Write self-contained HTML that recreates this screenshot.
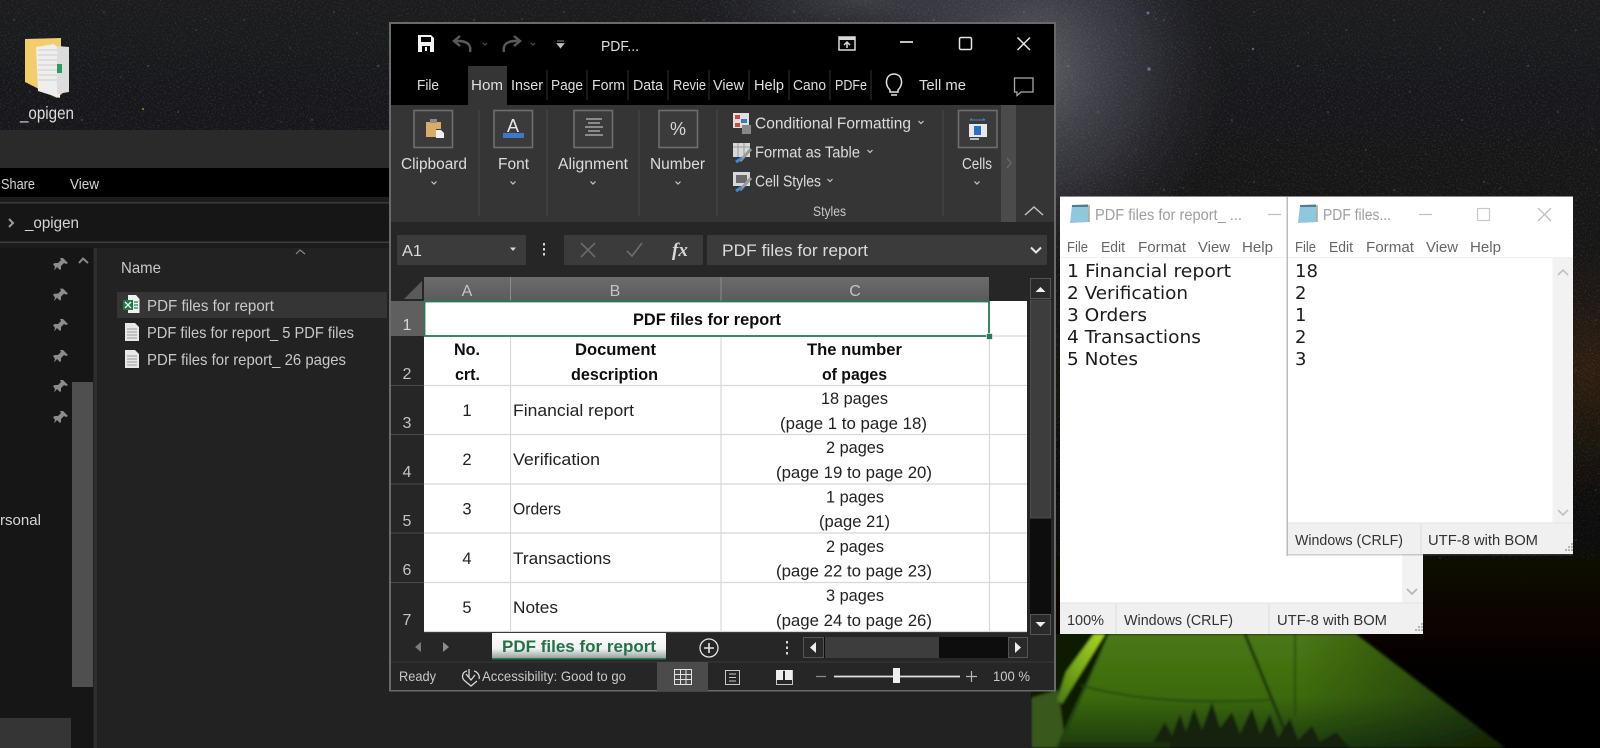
<!DOCTYPE html>
<html><head><meta charset="utf-8"><title>PDF files</title>
<style>
html,body{margin:0;padding:0;background:#141414;width:1600px;height:748px;overflow:hidden}
svg{display:block}
text{font-family:"Liberation Sans",sans-serif;white-space:pre}
.c{font-size:16.5px;fill:#222}.b{font-size:16.5px;fill:#111;font-weight:bold}
.h{font-size:16px;fill:#c4c4c4}
.r{font-size:15.5px;fill:#dcdcdc}.t{font-size:15px;fill:#dedede}
.e{font-size:15px;fill:#c9c9c9}
.n{font-size:18px;fill:#1e1e1e;font-family:"DejaVu Sans",sans-serif}
.m{font-size:15px;fill:#666}.s{font-size:15px;fill:#333}
.st{font-size:14px;fill:#c8c8c8}
</style></head><body>
<svg width="1600" height="748" viewBox="0 0 1600 748" xmlns="http://www.w3.org/2000/svg">
<defs>
<linearGradient id="sky" x1="0" y1="0" x2="0" y2="1"><stop offset="0" stop-color="#1a1b1f"/><stop offset=".55" stop-color="#13120f"/><stop offset=".75" stop-color="#080706"/><stop offset="1" stop-color="#050504"/></linearGradient>
<radialGradient id="band" cx=".5" cy=".5" r=".5"><stop offset="0" stop-color="#6a6a74" stop-opacity=".85"/><stop offset=".55" stop-color="#4a4a56" stop-opacity=".5"/><stop offset="1" stop-color="#33333c" stop-opacity="0"/></radialGradient>
<radialGradient id="brown" cx=".5" cy=".5" r=".5"><stop offset="0" stop-color="#5a3212" stop-opacity=".7"/><stop offset="1" stop-color="#2a1a08" stop-opacity="0"/></radialGradient>
<linearGradient id="tent" x1="0" y1="0" x2="0" y2="1"><stop offset="0" stop-color="#4a7814"/><stop offset=".55" stop-color="#3c6a0e"/><stop offset="1" stop-color="#1c3a08"/></linearGradient>
<linearGradient id="tentR" x1="0" y1="0" x2="1" y2="0"><stop offset="0" stop-color="#0a1204" stop-opacity="0"/><stop offset="1" stop-color="#0a1204" stop-opacity=".6"/></linearGradient>
<linearGradient id="glow" x1="1" y1="0" x2="0" y2="1"><stop offset="0" stop-color="#a8d826"/><stop offset=".5" stop-color="#7aac1a"/><stop offset="1" stop-color="#4a7814"/></linearGradient>
<linearGradient id="hdr" x1="0" y1="0" x2="0" y2="1"><stop offset="0" stop-color="#6c6c6c"/><stop offset="1" stop-color="#5a5a5a"/></linearGradient>
<linearGradient id="tab" x1="0" y1="0" x2="0" y2="1"><stop offset="0" stop-color="#fff"/><stop offset=".6" stop-color="#f2f2f2"/><stop offset="1" stop-color="#8e9a94"/></linearGradient>
<pattern id="stars" width="230" height="170" patternUnits="userSpaceOnUse">
<g fill="#cfd0d4">
<ellipse cx="14" cy="20" rx="1.300" ry=".6"/><ellipse cx="60" cy="48" rx="1.100" ry=".5"/><ellipse cx="104" cy="12" rx="1.200" ry=".6"/><ellipse cx="148" cy="66" rx="1.400" ry=".7"/><ellipse cx="196" cy="30" rx="1.100" ry=".5"/><ellipse cx="30" cy="92" rx="1.100" ry=".5"/><ellipse cx="82" cy="120" rx="1.400" ry=".6"/><ellipse cx="128" cy="140" rx="1" ry=".5"/><ellipse cx="178" cy="112" rx="1.200" ry=".6"/><ellipse cx="216" cy="150" rx="1.100" ry=".5"/><ellipse cx="46" cy="154" rx="1" ry=".5"/>
</g></pattern>
<pattern id="stars2" width="317" height="211" patternUnits="userSpaceOnUse">
<g fill="#c4c5cc">
<ellipse cx="40" cy="33" rx="1.100" ry=".5"/><ellipse cx="121" cy="77" rx="1" ry=".5"/><ellipse cx="205" cy="19" rx="1.200" ry=".6"/><ellipse cx="281" cy="122" rx="1.100" ry=".5"/><ellipse cx="94" cy="171" rx="1" ry=".5"/><ellipse cx="232" cy="188" rx="1.200" ry=".6"/>
</g></pattern>
<filter id="grain" x="0" y="0" width="100%" height="100%"><feTurbulence type="fractalNoise" baseFrequency=".6" numOctaves="2" seed="7"/><feColorMatrix values="0 0 0 0 1 0 0 0 0 1 0 0 0 0 1 3 0 0 0 -1.500"/></filter>
<filter id="soft"><feGaussianBlur stdDeviation=".35"/></filter>
<filter id="bl1" x="-5%" y="-5%" width="110%" height="110%"><feGaussianBlur stdDeviation="1.200"/></filter>
</defs>

<g filter="url(#soft)">
<!-- wallpaper -->
<rect width="1600" height="748" fill="url(#sky)"/>
<ellipse cx="1035" cy="70" rx="190" ry="210" fill="url(#band)"/>
<ellipse cx="860" cy="0" rx="180" ry="60" fill="url(#band)" opacity=".5"/>
<ellipse cx="1590" cy="370" rx="130" ry="150" fill="url(#brown)" opacity=".55"/>
<rect width="1600" height="560" fill="url(#stars)" opacity=".26"/>
<rect width="1600" height="560" fill="url(#stars2)" opacity=".22"/>
<rect width="1600" height="560" filter="url(#grain)" opacity=".1"/>
<circle cx="1148" cy="13" r="1.500" fill="#5f6f96"/><circle cx="1149" cy="69" r="1.800" fill="#5f6f96"/><circle cx="1253" cy="49" r="1.200" fill="#55658c"/><circle cx="143" cy="109" r="1" fill="#a87a3a"/>

<!-- tent -->
<g filter="url(#bl1)">
<path d="M1031 634H1110L1060 748H1031Z" fill="#0f1a06"/>
<path d="M1031 698L1058 690 1066 748H1031Z" fill="#38581a"/>
<path d="M1108 634H1356L1505 748H1056Z" fill="url(#tent)"/>
<path d="M1300 634H1356L1505 748H1300Z" fill="url(#tentR)"/>
<path d="M1105 634L1094 634 1066 672 1057 700 1062 704Z" fill="url(#glow)"/>
<path d="M1108 634L1060 745" stroke="#1f3a08" stroke-width="1.600" fill="none"/>
<path d="M1245 634L1292 748" stroke="#1a3208" stroke-width="3" fill="none"/>
<path d="M1295 634V715" stroke="#23400c" stroke-width="1.500" fill="none"/>
<path d="M1080 685Q1150 706 1270 700" stroke="#22400a" stroke-width="1.600" fill="none"/>
<path d="M1150 748L1165 722 1172 736 1180 714 1186 732 1194 708 1202 730 1212 702 1220 728 1232 712 1240 734 1252 708 1260 734 1270 714 1278 738 1290 718 1298 740 1312 726 1320 742 1336 732 1350 748Z" fill="#14240a"/>
<path d="M1060 748V742H1170V748Z" fill="#1a3008"/>
</g>

<!-- desktop icon -->
<path d="M25 39L61 38V50H64V92L57 98 25 82Z" fill="#f3cd6b"/>
<path d="M36 47L54 44 60 50V98L38 91Z" fill="#eeeeee"/>
<path d="M38 50H57M38 55H57M38 60H57M38 65H57M38 70H57M38 75H57M38 80H57" stroke="#cfcfcf"/>
<path d="M57 46L69 47V92L57 94Z" fill="#dcdcdc"/>
<rect x="57" y="64" width="5" height="9" fill="#2e9c5a"/>
<text x="20" y="119" style="font-size:17.500px;fill:#dcdcdc" textLength="54" lengthAdjust="spacingAndGlyphs">_opigen</text>

<!-- explorer -->
<rect x="0" y="130" width="1031" height="618" fill="#202020"/>
<rect x="0" y="130" width="1031" height="38" fill="#2b2b2b"/>
<rect x="0" y="168" width="1031" height="29" fill="#000"/>
<rect x="0" y="197" width="1031" height="5" fill="#1c1c1c"/>
<rect x="0" y="202" width="1031" height="1.500" fill="#3a3a3a"/>
<rect x="0" y="203.500" width="1031" height="38" fill="#191919"/>
<rect x="0" y="241.500" width="1031" height="1.500" fill="#3e3e3e"/>
<rect x="0" y="243" width="1031" height="5" fill="#1c1c1c"/>
<rect x="0" y="248" width="72" height="500" fill="#191919"/>
<rect x="72" y="248" width="21" height="500" fill="#171717"/>
<rect x="72" y="382" width="21" height="305" fill="#505050"/>
<rect x="0" y="718" width="71" height="30" fill="#353535"/>
<rect x="94" y="248" width="3" height="500" fill="#2e2e2e"/>
<text x="1" y="189" class="e" textLength="34" lengthAdjust="spacingAndGlyphs" style="fill:#d4d4d4">Share</text>
<text x="70" y="189" class="e" textLength="29" lengthAdjust="spacingAndGlyphs" style="fill:#d4d4d4">View</text>
<path d="M9 219L13 223 9 227" fill="none" stroke="#9a9a9a" stroke-width="2"/>
<text x="25" y="228" style="font-size:16px;fill:#d4d4d4" textLength="54" lengthAdjust="spacingAndGlyphs">_opigen</text>
<path d="M79 263L83 258.500 88 263" fill="none" stroke="#8a8a8a" stroke-width="2"/>
<path d="M296 254L300 250 305 254" fill="none" stroke="#8a8a8a" stroke-width="1.200"/>
<!-- pins -->
<g fill="#8c8c8c">
<path d="M63 258L68 263 66 264 64 263 61 266 61 269 60 270 57 267 54 270.500 55 267 53 264 55 263 58 263 61 260 60 258Z"/>
<path transform="translate(0,30.600)" d="M63 258L68 263 66 264 64 263 61 266 61 269 60 270 57 267 54 270.500 55 267 53 264 55 263 58 263 61 260 60 258Z"/>
<path transform="translate(0,61)" d="M63 258L68 263 66 264 64 263 61 266 61 269 60 270 57 267 54 270.500 55 267 53 264 55 263 58 263 61 260 60 258Z"/>
<path transform="translate(0,92)" d="M63 258L68 263 66 264 64 263 61 266 61 269 60 270 57 267 54 270.500 55 267 53 264 55 263 58 263 61 260 60 258Z"/>
<path transform="translate(0,122)" d="M63 258L68 263 66 264 64 263 61 266 61 269 60 270 57 267 54 270.500 55 267 53 264 55 263 58 263 61 260 60 258Z"/>
<path transform="translate(0,153)" d="M63 258L68 263 66 264 64 263 61 266 61 269 60 270 57 267 54 270.500 55 267 53 264 55 263 58 263 61 260 60 258Z"/>
</g>
<text x="121" y="273" class="e" textLength="40" lengthAdjust="spacingAndGlyphs" style="font-size:16px">Name</text>
<rect x="117" y="292" width="270" height="26" fill="#363636"/>
<path d="M128 295H136L139.500 299V313H128Z" fill="#f1f1f1"/>
<rect x="123" y="300" width="10" height="10" fill="#1d7a45"/>
<path d="M125 302L131 308M131 302L125 308" stroke="#fff" stroke-width="1.300"/>
<path d="M134 302H138M134 305H138M134 308H138" stroke="#3a9a62" stroke-width="1.500"/>
<text x="147" y="311" class="e" textLength="127" lengthAdjust="spacingAndGlyphs" style="font-size:16px">PDF files for report</text>
<path d="M125 323H135L139 327V341H125Z" fill="#e8e8e8"/><path d="M127 329H137M127 332H137M127 335H137M127 338H137" stroke="#9a9a9a"/>
<text x="147" y="338" class="e" textLength="207" lengthAdjust="spacingAndGlyphs" style="font-size:16px">PDF files for report_ 5 PDF files</text>
<path d="M125 350H135L139 354V368H125Z" fill="#e8e8e8"/><path d="M127 356H137M127 359H137M127 362H137M127 365H137" stroke="#9a9a9a"/>
<text x="147" y="365" class="e" textLength="199" lengthAdjust="spacingAndGlyphs" style="font-size:16px">PDF files for report_ 26 pages</text>
<text x="0" y="525" class="e" textLength="41" lengthAdjust="spacingAndGlyphs" style="fill:#d4d4d4">rsonal</text>

<!-- EXCEL window -->
<rect x="389" y="22" width="667" height="669.500" fill="#6a6a6a"/>
<rect x="391" y="24" width="663" height="81" fill="#050505"/>
<rect x="391" y="105" width="663" height="117" fill="#363636"/>
<rect x="391" y="222" width="663" height="468" fill="#262626"/>

<!-- quick access -->
<path d="M418 35H431L434 38V52H418Z" fill="#f2f2f2"/><rect x="421" y="37" width="10" height="5" fill="#050505"/><rect x="422" y="46" width="8" height="6" fill="#050505"/><rect x="425" y="47" width="2" height="4" fill="#f2f2f2"/>
<path d="M470 52Q472 42 460 41H455M460 36L454 41 460 46" fill="none" stroke="#5a5a5a" stroke-width="2.400"/>
<path d="M483 43L485 45 487 43" fill="none" stroke="#4c4c4c" stroke-width="1.200"/>
<path d="M504 52Q502 42 514 41H519M514 36L520 41 514 46" fill="none" stroke="#5a5a5a" stroke-width="2.400"/>
<path d="M531 43L533 45 535 43" fill="none" stroke="#4c4c4c" stroke-width="1.200"/>
<path d="M557 41H564M557 43.500L564 43.500 560.500 48Z" fill="#bdbdbd" stroke="#bdbdbd" stroke-width=".8"/>
<text x="601" y="51" class="t" textLength="38" lengthAdjust="spacingAndGlyphs">PDF...</text>
<!-- window buttons -->
<rect x="839" y="37" width="16" height="13" fill="none" stroke="#d8d8d8" stroke-width="1.500"/><rect x="839" y="37" width="16" height="3" fill="#d8d8d8"/><path d="M847 48V42M844 45L847 42 850 45" fill="none" stroke="#d8d8d8" stroke-width="1.500"/>
<path d="M900 42H913" stroke="#d8d8d8" stroke-width="1.800"/>
<rect x="959.500" y="37.500" width="12" height="12" rx="1.500" fill="none" stroke="#e4e4e4" stroke-width="1.500"/>
<path d="M1017.500 37.500L1030 50M1030 37.500L1017.500 50" stroke="#e8e8e8" stroke-width="1.500"/>

<!-- tabs -->
<rect x="468" y="66" width="39" height="39" fill="#363636"/>
<g class="t">
<text x="417" y="90" class="t" textLength="22" lengthAdjust="spacingAndGlyphs">File</text>
<text x="471" y="90" class="t" textLength="32" lengthAdjust="spacingAndGlyphs">Hom</text>
<text x="511" y="90" class="t" textLength="32" lengthAdjust="spacingAndGlyphs">Inser</text>
<text x="551" y="90" class="t" textLength="32" lengthAdjust="spacingAndGlyphs">Page</text>
<text x="592" y="90" class="t" textLength="33" lengthAdjust="spacingAndGlyphs">Form</text>
<text x="633" y="90" class="t" textLength="30" lengthAdjust="spacingAndGlyphs">Data</text>
<text x="673" y="90" class="t" textLength="33" lengthAdjust="spacingAndGlyphs">Revie</text>
<text x="713" y="90" class="t" textLength="31" lengthAdjust="spacingAndGlyphs">View</text>
<text x="754" y="90" class="t" textLength="30" lengthAdjust="spacingAndGlyphs">Help</text>
<text x="793" y="90" class="t" textLength="33" lengthAdjust="spacingAndGlyphs">Cano</text>
<text x="835" y="90" class="t" textLength="32" lengthAdjust="spacingAndGlyphs">PDFe</text>
<text x="919" y="90" class="t" textLength="47" lengthAdjust="spacingAndGlyphs">Tell me</text>
</g>
<path d="M547 70V100M587 70V100M628 70V100M668 70V100M709 70V100M749 70V100M789 70V100M830 70V100M871 70V100" stroke="#333" stroke-width="1"/>
<path d="M890 90C884 84 886 74 894 74S904 84 898 90V92H890ZM891 95H897" fill="none" stroke="#e0e0e0" stroke-width="1.500"/>
<path d="M1014.500 78H1033V92H1021L1017 95.500V92H1014.500Z" fill="none" stroke="#a8a8a8" stroke-width="1.300"/>

<!-- ribbon buttons -->
<g fill="#3a3a3a" stroke="#6e6e6e" stroke-width="1.600">
<rect x="414" y="110.500" width="38.500" height="37"/>
<rect x="494" y="110.500" width="38.500" height="37"/>
<rect x="574" y="110.500" width="38.500" height="37"/>
<rect x="659" y="110.500" width="38.500" height="37"/>
<rect x="958.500" y="110.500" width="38.500" height="37"/>
</g>
<!-- clipboard -->
<path d="M426 122H441V129H436V137H426Z" fill="#d9ad66"/><rect x="430" y="119" width="7" height="4" fill="#8c8c8c"/><path d="M436 130H441L444 133V138H436Z" fill="#f0f0f0"/>
<!-- font -->
<text x="513" y="132" text-anchor="middle" style="font-size:18px;fill:#e8e8e8">A</text><rect x="503" y="133" width="21" height="5" fill="#3a78c8"/>
<!-- align -->
<path d="M586 119H602M588 123H600M585 127H603M588 131H600M585 135H603" stroke="#bbb" stroke-width="1.200"/>
<!-- number -->
<text x="678" y="135" text-anchor="middle" style="font-size:18px;fill:#d8d8d8">%</text>
<!-- cells -->
<path d="M970 120H985M970 120L972 118.500M985 120L983 118.500" stroke="#4a86d0" stroke-width="1"/><rect x="969" y="124" width="18" height="13" fill="#e8e8e8"/><rect x="974" y="126" width="7" height="9" fill="#2b70c4"/><rect x="970" y="138" width="9" height="2" fill="#bbb"/>
<text x="401" y="169" class="r" textLength="66" lengthAdjust="spacingAndGlyphs">Clipboard</text>
<text x="498" y="169" class="r" textLength="31" lengthAdjust="spacingAndGlyphs">Font</text>
<text x="558" y="169" class="r" textLength="70" lengthAdjust="spacingAndGlyphs">Alignment</text>
<text x="650" y="169" class="r" textLength="55" lengthAdjust="spacingAndGlyphs">Number</text>
<text x="962" y="169" class="r" textLength="30" lengthAdjust="spacingAndGlyphs">Cells</text>
<g fill="none" stroke="#c8c8c8" stroke-width="1.200"><path d="M431.500 181.500L434 184 436.500 181.500"/><path d="M510.500 181.500L513 184 515.500 181.500"/><path d="M590.500 181.500L593 184 595.500 181.500"/><path d="M675.500 181.500L678 184 680.500 181.500"/><path d="M974.500 181.500L977 184 979.500 181.500"/><path d="M918.500 121L921 123.500 923.500 121"/><path d="M867.500 150L870 152.500 872.500 150"/><path d="M827.500 179L830 181.500 832.500 179"/></g>
<path d="M479 110V216M547 110V216M639 110V216M717 110V216M943 110V216" stroke="#4a4a4a"/>
<!-- styles icons -->
<rect x="733" y="113" width="16" height="15" fill="#e0e0e0"/><rect x="735" y="115" width="5" height="4" fill="#d04a3c"/><rect x="741" y="119" width="6" height="4" fill="#3a78c8"/><rect x="735" y="123" width="5" height="4" fill="#d04a3c"/><rect x="742" y="125" width="9" height="9" fill="#888"/>
<rect x="733" y="143" width="17" height="14" fill="#d8d8d8"/><path d="M733 147H750M738 143V157M744 143V157" stroke="#9a9a9a"/><path d="M740 161L751 149" stroke="#9a9a9a" stroke-width="3"/><path d="M736 162L742 158" stroke="#3a8ad8" stroke-width="3"/>
<rect x="733" y="172" width="17" height="14" fill="#d8d8d8"/><rect x="736" y="175" width="11" height="8" fill="#6a6a6a"/><path d="M740 190L751 178" stroke="#9a9a9a" stroke-width="3"/><path d="M736 191L742 187" stroke="#3a8ad8" stroke-width="3"/>
<text x="755" y="128.500" class="r" textLength="156" lengthAdjust="spacingAndGlyphs">Conditional Formatting</text>
<text x="755" y="157.500" class="r" textLength="105" lengthAdjust="spacingAndGlyphs">Format as Table</text>
<text x="755" y="186.500" class="r" textLength="66" lengthAdjust="spacingAndGlyphs">Cell Styles</text>
<text x="813" y="216" class="st" textLength="33" lengthAdjust="spacingAndGlyphs">Styles</text>
<rect x="1001" y="105" width="15" height="117" fill="#4c4c4c"/>
<path d="M1007 158L1011 163 1007 168" fill="none" stroke="#6a6a6a" stroke-width="1.200"/>
<path d="M1025 215L1034 207 1043 215" fill="none" stroke="#c0c0c0" stroke-width="1.500"/>

<!-- formula bar -->
<rect x="397" y="235" width="129" height="30" fill="#3a3a3a"/>
<rect x="564" y="235" width="139" height="30" fill="#3a3a3a"/>
<rect x="707" y="235" width="340" height="30" fill="#3a3a3a"/>
<text x="402" y="256" class="r" textLength="20" lengthAdjust="spacingAndGlyphs" style="font-size:16px">A1</text>
<path d="M510 247.500H516L513 251Z" fill="#d8d8d8"/>
<path d="M544 243V245.500M544 248V250.500M544 253V255.500" stroke="#d8d8d8" stroke-width="2"/>
<path d="M581 243L595 257M595 243L581 257" stroke="#6a6a6a" stroke-width="1.600"/>
<path d="M627 251L632 256 642 243" fill="none" stroke="#6a6a6a" stroke-width="1.800"/>
<text x="672" y="256" style="font-family:'Liberation Serif',serif;font-style:italic;font-weight:bold;font-size:19px;fill:#d8d8d8">fx</text>
<text x="722" y="256" class="r" textLength="146" lengthAdjust="spacingAndGlyphs" style="font-size:16.500px">PDF files for report</text>
<path d="M1031 247.500L1036 252.500 1041 247.500" fill="none" stroke="#e8e8e8" stroke-width="2"/>

<!-- col headers -->
<rect x="424" y="277" width="565" height="24" fill="url(#hdr)"/>
<path d="M510.500 277V301M721 277V301" stroke="#8c8c8c"/>
<path d="M404 299L422 281V299Z" fill="#5a5a5a"/>
<text x="467" y="296" text-anchor="middle" class="h">A</text>
<text x="615" y="296" text-anchor="middle" class="h">B</text>
<text x="855" y="296" text-anchor="middle" class="h">C</text>

<!-- sheet -->
<rect x="424" y="301" width="603" height="331" fill="#fff"/>
<rect x="391" y="301" width="33" height="35" fill="#5e5e5e"/>
<path d="M391 385.500H424M391 434.500H424M391 484H424M391 533H424M391 582.500H424" stroke="#4c4c4c"/>
<path d="M424 336H1027M424 385.500H1027M424 434.500H1027M424 484H1027M424 533H1027M424 582.500H1027M424 631.500H1027" stroke="#d8d8d8" stroke-width="1.200"/>
<path d="M510.500 336V632M721 336V632M989.500 301V632" stroke="#d8d8d8" stroke-width="1.200"/>
<rect x="424.500" y="301.500" width="564.500" height="34.500" fill="none" stroke="#2a7a57" stroke-width="1.800"/>
<rect x="986.500" y="333.500" width="6" height="6" fill="#2a7a57" stroke="#fff" stroke-width=".6"/>
<g class="h">
<text x="407" y="330" text-anchor="middle" class="h" style="fill:#d8d8d8">1</text>
<text x="407" y="379" text-anchor="middle" class="h">2</text>
<text x="407" y="428" text-anchor="middle" class="h">3</text>
<text x="407" y="477" text-anchor="middle" class="h">4</text>
<text x="407" y="526" text-anchor="middle" class="h">5</text>
<text x="407" y="575" text-anchor="middle" class="h">6</text>
<text x="407" y="625" text-anchor="middle" class="h">7</text>
</g>
<text x="633" y="325" class="b" textLength="148" lengthAdjust="spacingAndGlyphs">PDF files for report</text>
<text x="454" y="355" class="b" textLength="26" lengthAdjust="spacingAndGlyphs">No.</text>
<text x="455" y="380" class="b" textLength="25" lengthAdjust="spacingAndGlyphs">crt.</text>
<text x="575" y="355" class="b" textLength="81" lengthAdjust="spacingAndGlyphs">Document</text>
<text x="571" y="380" class="b" textLength="87" lengthAdjust="spacingAndGlyphs">description</text>
<text x="807" y="355" class="b" textLength="95" lengthAdjust="spacingAndGlyphs">The number</text>
<text x="822" y="380" class="b" textLength="65" lengthAdjust="spacingAndGlyphs">of pages</text>

<text x="467" y="416" text-anchor="middle" class="c">1</text>
<text x="513" y="416" class="c" textLength="121" lengthAdjust="spacingAndGlyphs">Financial report</text>
<text x="821" y="404" class="c" textLength="67" lengthAdjust="spacingAndGlyphs">18 pages</text>
<text x="780" y="429" class="c" textLength="147" lengthAdjust="spacingAndGlyphs">(page 1 to page 18)</text>

<text x="467" y="465" text-anchor="middle" class="c">2</text>
<text x="513" y="465" class="c" textLength="87" lengthAdjust="spacingAndGlyphs">Verification</text>
<text x="826" y="453" class="c" textLength="58" lengthAdjust="spacingAndGlyphs">2 pages</text>
<text x="776" y="478" class="c" textLength="156" lengthAdjust="spacingAndGlyphs">(page 19 to page 20)</text>

<text x="467" y="514.500" text-anchor="middle" class="c">3</text>
<text x="513" y="514.500" class="c" textLength="48" lengthAdjust="spacingAndGlyphs">Orders</text>
<text x="826" y="502.500" class="c" textLength="58" lengthAdjust="spacingAndGlyphs">1 pages</text>
<text x="819" y="527" class="c" textLength="71" lengthAdjust="spacingAndGlyphs">(page 21)</text>

<text x="467" y="564" text-anchor="middle" class="c">4</text>
<text x="513" y="564" class="c" textLength="98" lengthAdjust="spacingAndGlyphs">Transactions</text>
<text x="826" y="552" class="c" textLength="58" lengthAdjust="spacingAndGlyphs">2 pages</text>
<text x="776" y="576.500" class="c" textLength="156" lengthAdjust="spacingAndGlyphs">(page 22 to page 23)</text>

<text x="467" y="613" text-anchor="middle" class="c">5</text>
<text x="513" y="613" class="c" textLength="45" lengthAdjust="spacingAndGlyphs">Notes</text>
<text x="826" y="601" class="c" textLength="58" lengthAdjust="spacingAndGlyphs">3 pages</text>
<text x="776" y="626" class="c" textLength="156" lengthAdjust="spacingAndGlyphs">(page 24 to page 26)</text>

<!-- v scrollbar -->
<rect x="1030" y="278" width="21" height="356" fill="#0a0a0a"/>
<rect x="1030.500" y="278.500" width="20" height="20" fill="#2c2c2c" stroke="#555"/>
<path d="M1035.500 292L1040.500 287 1045.500 292Z" fill="#eee"/>
<rect x="1030.500" y="300" width="20" height="218" fill="#3c3c3c" stroke="#4e4e4e"/>
<rect x="1030.500" y="614.500" width="20" height="20" fill="#2c2c2c" stroke="#555"/>
<path d="M1035.500 622L1040.500 627 1045.500 622Z" fill="#eee"/>

<!-- sheet tabs -->
<path d="M421 642L415 647 421 652Z" fill="#7a7a7a"/><path d="M443 642L449 647 443 652Z" fill="#8c8c8c"/>
<rect x="492" y="633" width="174" height="26" fill="url(#tab)"/>
<rect x="492" y="658" width="174" height="1.500" fill="#2a7a57"/>
<text x="502" y="652" style="font-size:16.500px;font-weight:bold;fill:#217346" textLength="154" lengthAdjust="spacingAndGlyphs">PDF files for report</text>
<circle cx="709" cy="648" r="9" fill="none" stroke="#e4e4e4" stroke-width="1.300"/><path d="M709 643V653M704 648H714" stroke="#e4e4e4" stroke-width="1.600"/>
<path d="M787 641V643.500M787 646.500V649M787 652V654.500" stroke="#d8d8d8" stroke-width="2"/>
<rect x="803" y="637" width="225" height="21" fill="#0a0a0a"/>
<rect x="803.500" y="637.500" width="20" height="20" fill="#2c2c2c" stroke="#555"/>
<path d="M816 642L810 647.500 816 653Z" fill="#eee"/>
<rect x="825" y="637" width="114" height="21" fill="#3c3c3c"/>
<rect x="1008.500" y="637.500" width="19" height="20" fill="#2c2c2c" stroke="#555"/>
<path d="M1015 642L1021 647.500 1015 653Z" fill="#eee"/>
<rect x="391" y="661.500" width="663" height="1" fill="#3a3a3a"/>

<!-- status bar -->
<text x="399" y="681" class="st" textLength="37" lengthAdjust="spacingAndGlyphs">Ready</text>
<path d="M467 671C462 672 461 678 465 681L471 686 477 681M474 671C478 672 480 676 479 679" fill="none" stroke="#d8d8d8" stroke-width="1.300"/><path d="M469 669V677M466 674L471 680 475 675" fill="none" stroke="#d8d8d8" stroke-width="1.300"/>
<text x="482" y="681" class="st" textLength="144" lengthAdjust="spacingAndGlyphs">Accessibility: Good to go</text>
<rect x="657" y="662" width="51" height="29" fill="#4c4c4c"/>
<path d="M674.500 669.500H691.500V684.500H674.500ZM674.500 674.500H691.500M674.500 679.500H691.500M680.500 669.500V684.500M686 669.500V684.500" fill="none" stroke="#e4e4e4"/>
<rect x="725.500" y="670.500" width="14" height="14" fill="none" stroke="#c8c8c8"/><path d="M729 674H736M729 677.500H736M729 681H736" stroke="#c8c8c8"/>
<path d="M776.500 670.500H792.500V684.500H776.500Z" fill="none" stroke="#c8c8c8"/><rect x="776" y="670" width="7" height="10" fill="#eee"/><rect x="785" y="670" width="7" height="10" fill="#eee"/>
<path d="M816 676.500H826" stroke="#8a8a8a" stroke-width="1.300"/>
<path d="M834 676.500H960" stroke="#e0e0e0" stroke-width="1.800"/>
<rect x="893" y="668" width="7" height="15" fill="#f0f0f0"/>
<path d="M966 676.500H977M971.500 671V682" stroke="#b8b8b8" stroke-width="1.200"/>
<text x="993" y="681" class="st" textLength="37" lengthAdjust="spacingAndGlyphs">100 %</text>

<!-- NOTEPAD back -->
<rect x="1060" y="196" width="363" height="438" fill="#fff"/>
<rect x="1060" y="196" width="363" height="1" fill="#888"/>
<rect x="1402" y="257" width="21" height="346" fill="#f2f2f2"/>
<path d="M1407 589L1412 594 1417 589" fill="none" stroke="#b4b4b4" stroke-width="1.600"/>
<rect x="1060" y="603" width="363" height="31" fill="#f0f0f0"/>
<path d="M1060 603H1423" stroke="#e2e2e2"/>
<path d="M1116 604V634M1269 604V634" stroke="#dcdcdc"/>
<path d="M1072 205L1088 204 1089 222 1070 223Z" fill="#8fc8dc"/><path d="M1072 205H1088V207H1072Z" fill="#5a7a88"/><path d="M1089 205V222" stroke="#b0a884" stroke-width="1.500"/>
<text x="1095" y="220" class="m" style="fill:#9e9e9e;font-size:15.500px" textLength="147" lengthAdjust="spacingAndGlyphs">PDF files for report_ ...</text>
<path d="M1268 214.500H1281" stroke="#c0c0c0" stroke-width="1.200"/>
<text x="1067" y="252" class="m" textLength="21" lengthAdjust="spacingAndGlyphs">File</text>
<text x="1101" y="252" class="m" textLength="24" lengthAdjust="spacingAndGlyphs">Edit</text>
<text x="1138" y="252" class="m" textLength="48" lengthAdjust="spacingAndGlyphs">Format</text>
<text x="1198" y="252" class="m" textLength="32" lengthAdjust="spacingAndGlyphs">View</text>
<text x="1242" y="252" class="m" textLength="31" lengthAdjust="spacingAndGlyphs">Help</text>
<path d="M1060 257.500H1288" stroke="#f0f0f0"/>
<text x="1067" y="277" class="n" textLength="164" lengthAdjust="spacingAndGlyphs">1 Financial report</text>
<text x="1067" y="299" class="n" textLength="121" lengthAdjust="spacingAndGlyphs">2 Verification</text>
<text x="1067" y="321" class="n" textLength="80" lengthAdjust="spacingAndGlyphs">3 Orders</text>
<text x="1067" y="343" class="n" textLength="134" lengthAdjust="spacingAndGlyphs">4 Transactions</text>
<text x="1067" y="365" class="n" textLength="71" lengthAdjust="spacingAndGlyphs">5 Notes</text>
<text x="1067" y="625" class="s" textLength="37" lengthAdjust="spacingAndGlyphs">100%</text>
<text x="1124" y="625" class="s" textLength="109" lengthAdjust="spacingAndGlyphs">Windows (CRLF)</text>
<text x="1277" y="625" class="s" textLength="110" lengthAdjust="spacingAndGlyphs">UTF-8 with BOM</text>
<path d="M1421 623h2v2h-2zM1418 626h2v2h-2zM1421 626h2v2h-2zM1415 629h2v2h-2zM1418 629h2v2h-2zM1421 629h2v2h-2z" fill="#b4b4b4"/>

<!-- NOTEPAD front -->
<rect x="1286.500" y="197" width="1.500" height="359" fill="#aaa" opacity=".8"/>
<rect x="1288" y="196" width="285" height="358" fill="#fff"/>
<rect x="1288" y="196" width="285" height="1" fill="#888"/>
<rect x="1288" y="554" width="285" height="1.500" fill="#777" opacity=".35"/>
<rect x="1552.500" y="258" width="20.500" height="265" fill="#f2f2f2"/>
<path d="M1558 275L1563 270 1568 275" fill="none" stroke="#c0c0c0" stroke-width="1.600"/>
<path d="M1558 510L1563 515 1568 510" fill="none" stroke="#c0c0c0" stroke-width="1.600"/>
<rect x="1288" y="523" width="285" height="31" fill="#f0f0f0"/>
<path d="M1288 523H1573" stroke="#e2e2e2"/><path d="M1421 524V554" stroke="#dcdcdc"/>
<path d="M1300 205L1316 204 1317 222 1298 223Z" fill="#8fc8dc"/><path d="M1300 205H1316V207H1300Z" fill="#5a7a88"/><path d="M1317 205V222" stroke="#b0a884" stroke-width="1.500"/>
<text x="1323" y="220" class="m" style="fill:#9e9e9e;font-size:15.500px" textLength="68" lengthAdjust="spacingAndGlyphs">PDF files...</text>
<path d="M1419 214.500H1432" stroke="#c0c0c0" stroke-width="1.200"/>
<rect x="1477.500" y="208.500" width="12" height="12" fill="none" stroke="#c8c8c8" stroke-width="1.200"/>
<path d="M1538 208L1551 221M1551 208L1538 221" stroke="#b8b8b8" stroke-width="1.200"/>
<text x="1295" y="252" class="m" textLength="21" lengthAdjust="spacingAndGlyphs">File</text>
<text x="1329" y="252" class="m" textLength="24" lengthAdjust="spacingAndGlyphs">Edit</text>
<text x="1366" y="252" class="m" textLength="48" lengthAdjust="spacingAndGlyphs">Format</text>
<text x="1426" y="252" class="m" textLength="32" lengthAdjust="spacingAndGlyphs">View</text>
<text x="1470" y="252" class="m" textLength="31" lengthAdjust="spacingAndGlyphs">Help</text>
<path d="M1288 257.500H1573" stroke="#f0f0f0"/>
<text x="1295" y="277" class="n" textLength="23" lengthAdjust="spacingAndGlyphs">18</text>
<text x="1295" y="299" class="n">2</text>
<text x="1295" y="321" class="n">1</text>
<text x="1295" y="343" class="n">2</text>
<text x="1295" y="365" class="n">3</text>
<text x="1295" y="545" class="s" textLength="108" lengthAdjust="spacingAndGlyphs">Windows (CRLF)</text>
<text x="1428" y="545" class="s" textLength="110" lengthAdjust="spacingAndGlyphs">UTF-8 with BOM</text>
<path d="M1571 543h2v2h-2zM1568 546h2v2h-2zM1571 546h2v2h-2zM1565 549h2v2h-2zM1568 549h2v2h-2zM1571 549h2v2h-2z" fill="#b4b4b4"/>
</g>
</svg>
</body></html>
